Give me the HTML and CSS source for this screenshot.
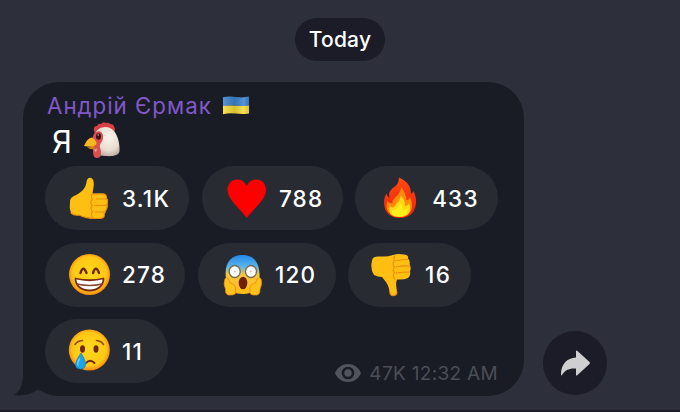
FILE: index.html
```html
<!DOCTYPE html>
<html lang="uk">
<head>
    <meta charset="UTF-8">
    <meta name="viewport" content="width=device-width, initial-scale=1.0">
    <title>Chat</title>
    <link rel="stylesheet" href="styles.css">
</head>
<body>
    <div class="chat">
        <div class="date">Today</div>
        <div class="message-row">
            <div class="bubble">
                <svg class="tail" viewBox="0 0 50 40">
                    <path d="M9 0V12C9 23 6 29 0 33Q13 35 24 27.500V0Z" fill="#191c24"/>
                </svg>
                <div class="author">
                    <span>Андрій Єрмак</span>
                    <svg class="flag" viewBox="0 0 26 19">
                        <defs>
                            <linearGradient id="flagShade">
                                <stop offset="0" stop-color="#fff" stop-opacity=".15"/>
                                <stop offset=".45" stop-color="#000" stop-opacity=".12"/>
                                <stop offset=".8" stop-color="#fff" stop-opacity=".15"/>
                                <stop offset="1" stop-color="#000" stop-opacity=".1"/>
                            </linearGradient>
                        </defs>
                        <path d="M0 1.3Q6 0 13 1T26 .6V9.7Q20 10.6 13 9.8T0 10.3Z" fill="#3c83cf"/>
                        <path d="M0 10Q6 9 13 9.8T26 9.4V17.4Q20 18.5 13 17.6T0 18.3Z" fill="#f8dc38"/>
                        <path d="M0 1.3Q6 0 13 1T26 .6V17.4Q20 18.5 13 17.6T0 18.3Z" fill="url(#flagShade)"/>
                    </svg>
                </div>
                <div class="text">
                    <span>Я</span>
                    <svg class="chicken" viewBox="0 0 38 38">
                        <defs>
                            <radialGradient id="feathers" cx=".55" cy=".35" r=".7">
                                <stop offset="0" stop-color="#fbf4ea"/>
                                <stop offset=".65" stop-color="#e8ddd1"/>
                                <stop offset="1" stop-color="#b5a89b"/>
                            </radialGradient>
                        </defs>
                        <path d="M11 9Q10 4 14 4Q15 1 18 2Q20-1 23 1Q26 0 27 2Q31 2 31 5Q33 7 31 10L13 13Z" fill="#d93f45"/>
                        <path d="M12 12C14 5 25 2 31 9C35 14 37 22 36.500 29C36 34 29 34.500 22 34C15 34 12 31 12 26Z" fill="url(#feathers)"/>
                        <path d="M11 12C14 7 21 9 20 16C20 20 16 21 17 26C19 31 18 36 14 36C10 36 10 31 10 27C6 27 9 16 11 12Z" fill="#dc4f50"/>
                        <path d="M1 24Q4 16 9 15.500Q14 19 13.500 22Q11 26 1 24Z" fill="#f5b91f"/>
                        <path d="M4 25Q9 26 12 23L11 27Q7 28 4 25Z" fill="#cc8516"/>
                        <path d="M11 27Q13 29 14 26L13 30Z" fill="#e8ddd1"/>
                        <ellipse cx="15.500" cy="14.500" rx="2.500" ry="3.300" fill="#3a1517"/>
                        <circle cx="15.200" cy="13" r=".8" fill="#c9b3ae"/>
                    </svg>
                </div>
                <svg class="defs" width="0" height="0">
                    <defs>
                        <radialGradient id="face" cx=".5" cy=".48" r=".52">
                            <stop offset="0" stop-color="#ffd91a"/>
                            <stop offset=".78" stop-color="#ffc814"/>
                            <stop offset="1" stop-color="#f58a13"/>
                        </radialGradient>
                        <linearGradient id="scare" x1="0" y1="0" x2="0" y2="1">
                            <stop offset="0" stop-color="#2488e8"/>
                            <stop offset=".3" stop-color="#5bb4ec"/>
                            <stop offset=".5" stop-color="#f5c83c"/>
                            <stop offset="1" stop-color="#ffb915"/>
                        </linearGradient>
                        <linearGradient id="flame" x1="0" y1="0" x2="0" y2="1">
                            <stop offset="0" stop-color="#ff4a12"/>
                            <stop offset="1" stop-color="#f0200b"/>
                        </linearGradient>
                    </defs>
                </svg>
                <div class="reactions">
                    <div class="reaction">
                        <svg class="emoji" viewBox="0 0 42 42">
                            <path d="M1 25C1 20 5 19 9 17C14 14 17 10 17.500 5C18 0 23-1 24.500 4C25.500 8 24 12 23.500 16.500H34Q38 17 37.500 21Q40 23 38.500 27Q39.500 31 37 33Q37 36 35 37Q36 41 31 41.500C24 42 16 41 10 38Q5 39 2 36Q0 31 1 25Z" fill="#ffbf12"/>
                            <path d="M23.500 16.500Q21 19 23.500 22.500Q20 25 23.500 28.500Q20.500 31 23.500 34.500Q21 37 24 40.500M25 17H34Q38 17 37.500 22H27M38 22Q39.500 28 36 28.500H26M37.500 29Q38 35 34 35H26M35 36Q37 41 31 41.500Q17 42 10 38Q5 39 2 36" fill="none" stroke="#ea8d0d" stroke-width="1.100" stroke-linecap="round"/>
                        </svg>
                        <span>3.1K</span>
                    </div>
                    <div class="reaction">
                        <svg class="emoji" viewBox="0 0 42 42">
                            <path d="M20.700 9C23 4.500 26.500 2.500 30 2.500C36 2.500 40 7 40 13C40 23 28 31 20.700 41C14 31 1.500 23 1.500 13C1.500 7 5.500 2.500 11.500 2.500C15 2.500 18.500 4.500 20.700 9Z" fill="#fd0000"/>
                        </svg>
                        <span>788</span>
                    </div>
                    <div class="reaction">
                        <svg class="emoji" viewBox="0 0 42 42">
                            <path d="M20 .5C28 4 32 9 32 17Q34 16 34.500 14C38 21 38 29 34 35C31 39 26 41 20.500 41C13 41 7 37 5.500 30C4.500 25 5 20 7.500 16.500Q8 20 10.500 21C9 15 12 12 16 9.500Q20 6 20 .5Z" fill="url(#flame)"/>
                            <path d="M22 10Q27 16 27.500 23Q30 23 31 20C35 29 34 39 20.500 40C8 39 6 31 8.500 24Q10 27 13.500 26C13 20 22 19 22 10Z" fill="#ff8a0c"/>
                            <path d="M21.500 18Q26 23 26 29Q29 29 30 26C33 34 30 40 20.500 40C11 40 9 35 11 29Q14 32 16 29C17 26 22 24 21.500 18Z" fill="#ffd914"/>
                            <path d="M22 26Q24 30 23 33Q27 33 28 31Q30 39 20.500 39.500Q11 39 13 33Q18 34 22 26Z" fill="#fff01c"/>
                        </svg>
                        <span>433</span>
                    </div>
                    <div class="reaction">
                        <svg class="emoji" viewBox="0 0 42 42">
                            <circle cx="20.500" cy="20.500" r="20.500" fill="url(#face)"/>
                            <path d="M11.500 19Q14.200 10.500 17.500 19M24 19Q26.800 10.500 30 19" fill="none" stroke="#6e280c" stroke-width="2.400" stroke-linecap="round"/>
                            <path d="M6.500 24.500Q20.500 28 34.500 24.500C34.500 32 28.500 36.500 20.500 36.500S6.500 32 6.500 24.500Z" fill="#fff" stroke="#7a2c13" stroke-width="1.800" stroke-linejoin="round"/>
                            <path d="M8 30Q20.500 33 33 30" fill="none" stroke="#8d4a32" stroke-width="1.300"/>
                        </svg>
                        <span>278</span>
                    </div>
                    <div class="reaction">
                        <svg class="emoji" viewBox="0 0 42 42">
                            <path d="M4 24C2 10 8 1 20.500 1S38 10 37.500 24C36 36 30 40 20.500 40S6 36 4 24Z" fill="url(#scare)"/>
                            <path d="M3 25Q4 22 6.500 25L8 29Q13 30 13.500 34V39Q13 41 9 41H6Q3 40 3.500 35Q1 30 3 25ZM39 25Q37.500 22 35 25L33.500 29Q28.500 30 28 34V39Q28.500 41 32 41H35Q38.500 40 38 35Q40.500 30 39 25Z" fill="#ffc21a" stroke="#e88b14" stroke-width=".8"/>
                            <ellipse cx="12.700" cy="17.500" rx="5.500" ry="6" fill="#fff" stroke="#756a54" stroke-width="1.300"/>
                            <ellipse cx="29" cy="17.500" rx="5.500" ry="6" fill="#fff" stroke="#756a54" stroke-width="1.300"/>
                            <circle cx="13" cy="17.500" r="1" fill="#c9c1b3"/>
                            <circle cx="28.800" cy="17.500" r="1" fill="#c9c1b3"/>
                            <ellipse cx="21" cy="29" rx="4.300" ry="6.300" fill="#702008"/>
                        </svg>
                        <span>120</span>
                    </div>
                    <div class="reaction">
                        <svg class="emoji" viewBox="0 0 42 42">
                            <path d="M0 7C0 3 4 2 9 2.500Q15 3 21 1Q26-.5 32 .5Q37 1 36 4.500Q38.500 7 37.500 10Q39.500 14 38 17Q39 21 36 24Q32 26 25 25.500C23 30 25 34 25 39C24 43 18 43 17.500 38C17 31 14 28 10 23Q6 23 2 21Q-2 15 0 7Z" fill="#ffbf12"/>
                            <path d="M23 2Q21 4 22.500 7Q19.500 10 22.500 13Q20 16 22.500 19Q20 22 23 25.500M24 6.500Q30 5.500 36 5.500M24 13Q31 11.500 37.500 12M24 19Q31 18 37.500 18M18 39Q19 42 22 41.500Q25 41 25 38" fill="none" stroke="#ea8d0d" stroke-width="1.100" stroke-linecap="round"/>
                        </svg>
                        <span>16</span>
                    </div>
                    <div class="reaction">
                        <svg class="emoji" viewBox="0 0 42 42">
                            <circle cx="20.300" cy="20" r="20.500" fill="url(#face)"/>
                            <path d="M6 14.500Q8 11 13.500 10.500M27.500 10.500Q32.500 11 34.500 14.500" fill="none" stroke="#97480d" stroke-width="1.600" stroke-linecap="round"/>
                            <ellipse cx="13.500" cy="19" rx="2.500" ry="3.700" fill="#70270b"/>
                            <ellipse cx="27" cy="19" rx="2.500" ry="3.700" fill="#70270b"/>
                            <path d="M17 33Q21 28.500 25.500 33" fill="none" stroke="#70270b" stroke-width="1.800" stroke-linecap="round"/>
                            <path d="M12 23Q17 31 16.500 35Q16 39 11.500 39T6.500 35Q6.500 31 12 23Z" fill="#1ca6e6" stroke="#1585c4" stroke-width=".8"/>
                            <path d="M10.500 29Q8 33 9 35" fill="none" stroke="#6ccdf5" stroke-width="1.500" stroke-linecap="round"/>
                        </svg>
                        <span>11</span>
                    </div>
                </div>
                <div class="meta">
                    <svg class="eye" viewBox="0 0 26 18">
                        <path d="M0 9C5-3 21-3 26 9C21 21 5 21 0 9Z" fill="#51545c"/>
                        <circle cx="13" cy="9" r="5" fill="none" stroke="#191c24" stroke-width="2.600"/>
                    </svg>
                    <span>47K 12:32 AM</span>
                </div>
            </div>
            <div class="share">
                <svg class="arrow" viewBox="0 0 30 26">
                    <path d="M15 1Q15 0 16.500 1L28.500 12Q29.500 13 28.500 14L16.500 25Q15 26 15 25V18.500C8 18 4 20 1 25Q0 26 0 24.500C0 14 6 8 15 7.500Z" fill="#cfcfcf"/>
                </svg>
            </div>
        </div>
    </div>
</body>
</html>
```

FILE: styles.css
```css
* {
    margin: 0;
    padding: 0;
    box-sizing: border-box;
}
body {
    font-family: Inter, 'Noto Sans', sans-serif;
    background: #2d2f3a;
    color: #fff;
    height: 100vh;
    overflow: hidden;
}
svg {
    display: block;
    flex: none;
    overflow: visible;
}
.chat {
    height: 412px;
    padding: 18px 0 0 23px;
    display: flex;
    flex-direction: column;
    border-bottom: 2px solid #1d1d29;
}
.date {
    margin-left: 272px;
    width: 90px;
    height: 43px;
    line-height: 43px;
    border-radius: 22px;
    background: #1c1c28;
    text-align: center;
    font-size: 21px;
    font-weight: 500;
    letter-spacing: 0.2px;
}
.message-row {
    display: flex;
    align-items: flex-end;
    gap: 18.5px;
    margin-top: 21px;
}
.bubble {
    position: relative;
    width: 501px;
    height: 314px;
    padding: 9px 22px 0;
    border-radius: 36px;
    background: #191c24;
}
.tail {
    position: absolute;
    left: -9px;
    bottom: -6px;
    width: 50px;
    height: 40px;
}
.author {
    display: flex;
    align-items: center;
    gap: 11px;
    height: 28px;
    padding-left: 2px;
    color: #8059c9;
    font-size: 22.3px;
    letter-spacing: 1px;
    white-space: nowrap;
}
.flag {
    width: 26px;
    height: 19px;
}
.text {
    display: flex;
    align-items: center;
    gap: 11px;
    height: 44px;
    padding-left: 7px;
    font-size: 31px;
}
.chicken {
    width: 38px;
    height: 38px;
}
.defs {
    position: absolute;
}
.reactions {
    display: flex;
    flex-wrap: wrap;
    gap: 12.5px;
    margin-top: 3px;
}
.reaction {
    display: flex;
    align-items: center;
    gap: 11px;
    min-width: 123px;
    height: 64px;
    padding: 0 19.3px 0 24px;
    border-radius: 32px;
    background: #292b33;
    font-size: 22.5px;
    font-weight: 500;
    letter-spacing: 1.2px;
}
.emoji {
    width: 42px;
    height: 42px;
}
.meta {
    position: absolute;
    right: 26px;
    bottom: 11px;
    display: flex;
    align-items: center;
    gap: 8px;
    height: 24px;
    color: #4b4e56;
    font-size: 19px;
    letter-spacing: 0.32px;
    white-space: nowrap;
}
.eye {
    width: 26px;
    height: 18px;
}
.share {
    width: 64px;
    height: 64px;
    margin-bottom: 1px;
    display: flex;
    align-items: center;
    justify-content: center;
    border-radius: 50%;
    background: #1c1c28;
}
.arrow {
    width: 30px;
    height: 26px;
    margin-left: 3px;
}
```
